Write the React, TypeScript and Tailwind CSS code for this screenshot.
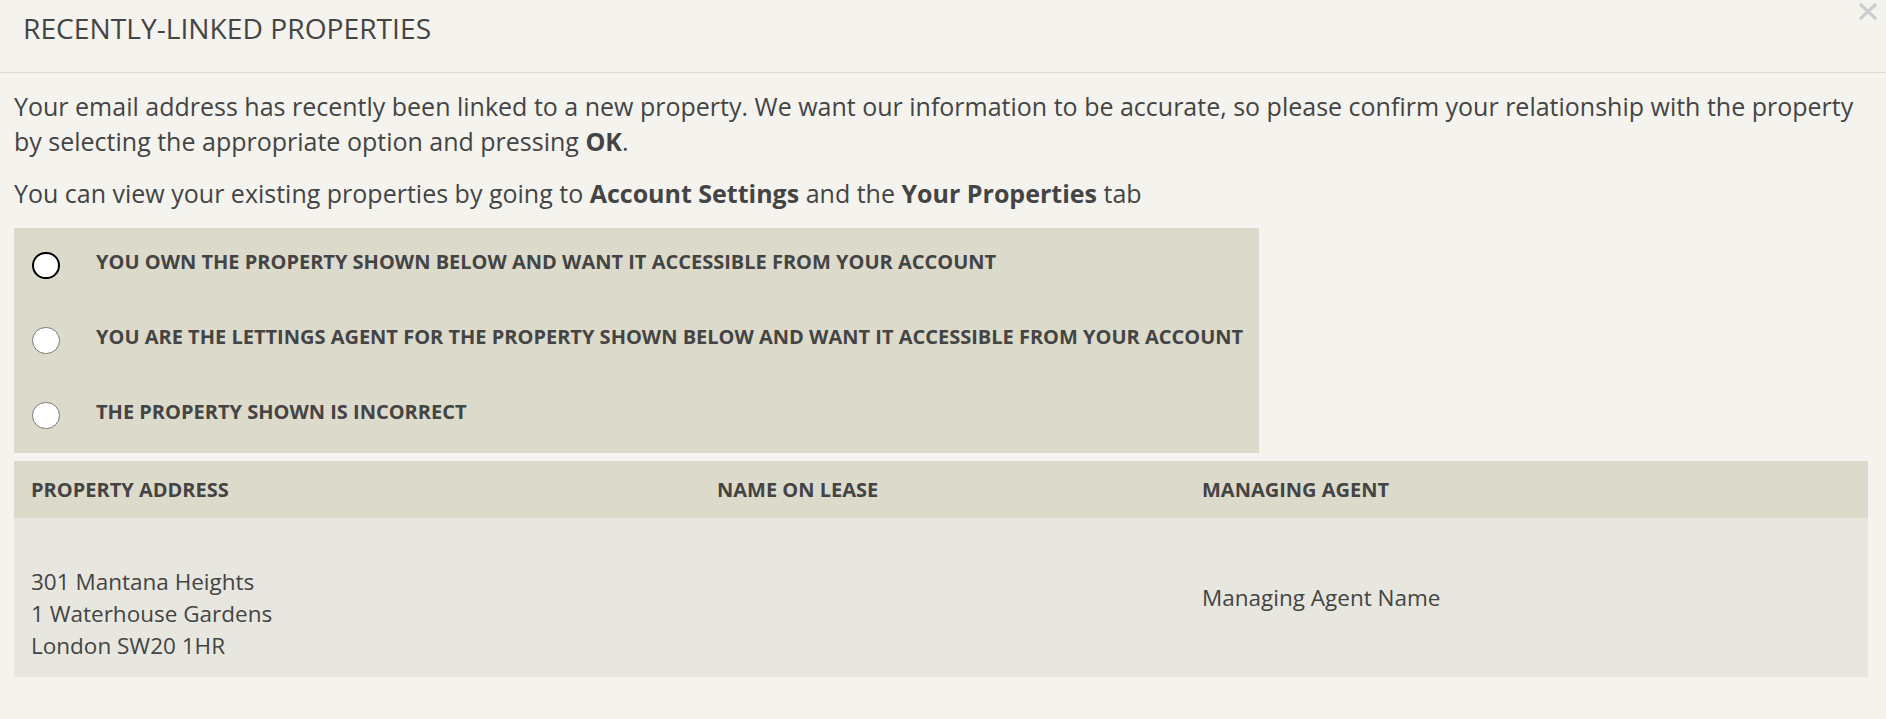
import React from "react";

const options = [
  "YOU OWN THE PROPERTY SHOWN BELOW AND WANT IT ACCESSIBLE FROM YOUR ACCOUNT",
  "YOU ARE THE LETTINGS AGENT FOR THE PROPERTY SHOWN BELOW AND WANT IT ACCESSIBLE FROM YOUR ACCOUNT",
  "THE PROPERTY SHOWN IS INCORRECT",
];

export default function App() {
  return (
    <div
      className="min-h-[719px] w-full bg-[#f4f3ee] text-[#444444]"
      style={{ fontFamily: '"Open Sans", "Noto Sans", sans-serif' }}
    >
      <div className="relative flex h-[73px] items-start border-b border-[#dddbcc] pl-[23px] pt-[10px]">
        <h2 className="text-[28.2px] font-normal leading-[36px]">RECENTLY-LINKED PROPERTIES</h2>
        <button className="absolute right-[9px] top-[3px]" aria-label="Close">
          <svg width="18" height="17" viewBox="0 0 18 17">
            <path d="M2 2 L16 15 M16 2 L2 15" stroke="#cccccc" strokeWidth="3.2" strokeLinecap="square" />
          </svg>
        </button>
      </div>
      <div className="px-[14px] pt-[16px]">
        <p className="text-[25px] leading-[35px]">
          Your email address has recently been linked to a new property. We want our information to be accurate, so
          please confirm your relationship with the property by selecting the appropriate option and pressing{" "}
          <b className="font-bold">OK</b>.
        </p>
        <p className="mt-[17px] text-[25px] leading-[35px]">
          You can view your existing properties by going to <b className="font-bold">Account Settings</b> and the{" "}
          <b className="font-bold">Your Properties</b> tab
        </p>
        <div className="mt-[17px] flex w-[1245px] flex-col bg-[#dcdacb] pl-[18px]">
          {options.map((o, i) => (
            <label key={i} className="flex h-[75px] items-center">
              <span
                className={
                  "h-[27px] w-[28px] shrink-0 rounded-full bg-white " +
                  (i === 0 ? "border-2 border-black" : "border border-[#777777]")
                }
              />
              <span className="mb-[8px] ml-[36px] text-[20px] font-bold leading-[26px] text-[#444444]">
                {o}
              </span>
            </label>
          ))}
        </div>
        <div className="mt-[8px] w-[1854px]">
          <div className="grid h-[57px] grid-cols-[686px_485px_683px] items-center bg-[#dcdacb] text-[20px] font-bold">
            <div className="pl-[17px]">PROPERTY ADDRESS</div>
            <div className="pl-[17px]">NAME ON LEASE</div>
            <div className="pl-[17px]">MANAGING AGENT</div>
          </div>
          <div className="grid h-[159px] grid-cols-[686px_485px_683px] items-center bg-[#e8e7df] text-[22.5px] leading-[32px]">
            <div className="pl-[17px] pt-[32px]">
              301 Mantana Heights
              <br />1 Waterhouse Gardens
              <br />London SW20 1HR
            </div>
            <div className="pl-[17px]"></div>
            <div className="pl-[17px]">Managing Agent Name</div>
          </div>
        </div>
      </div>
    </div>
  );
}
